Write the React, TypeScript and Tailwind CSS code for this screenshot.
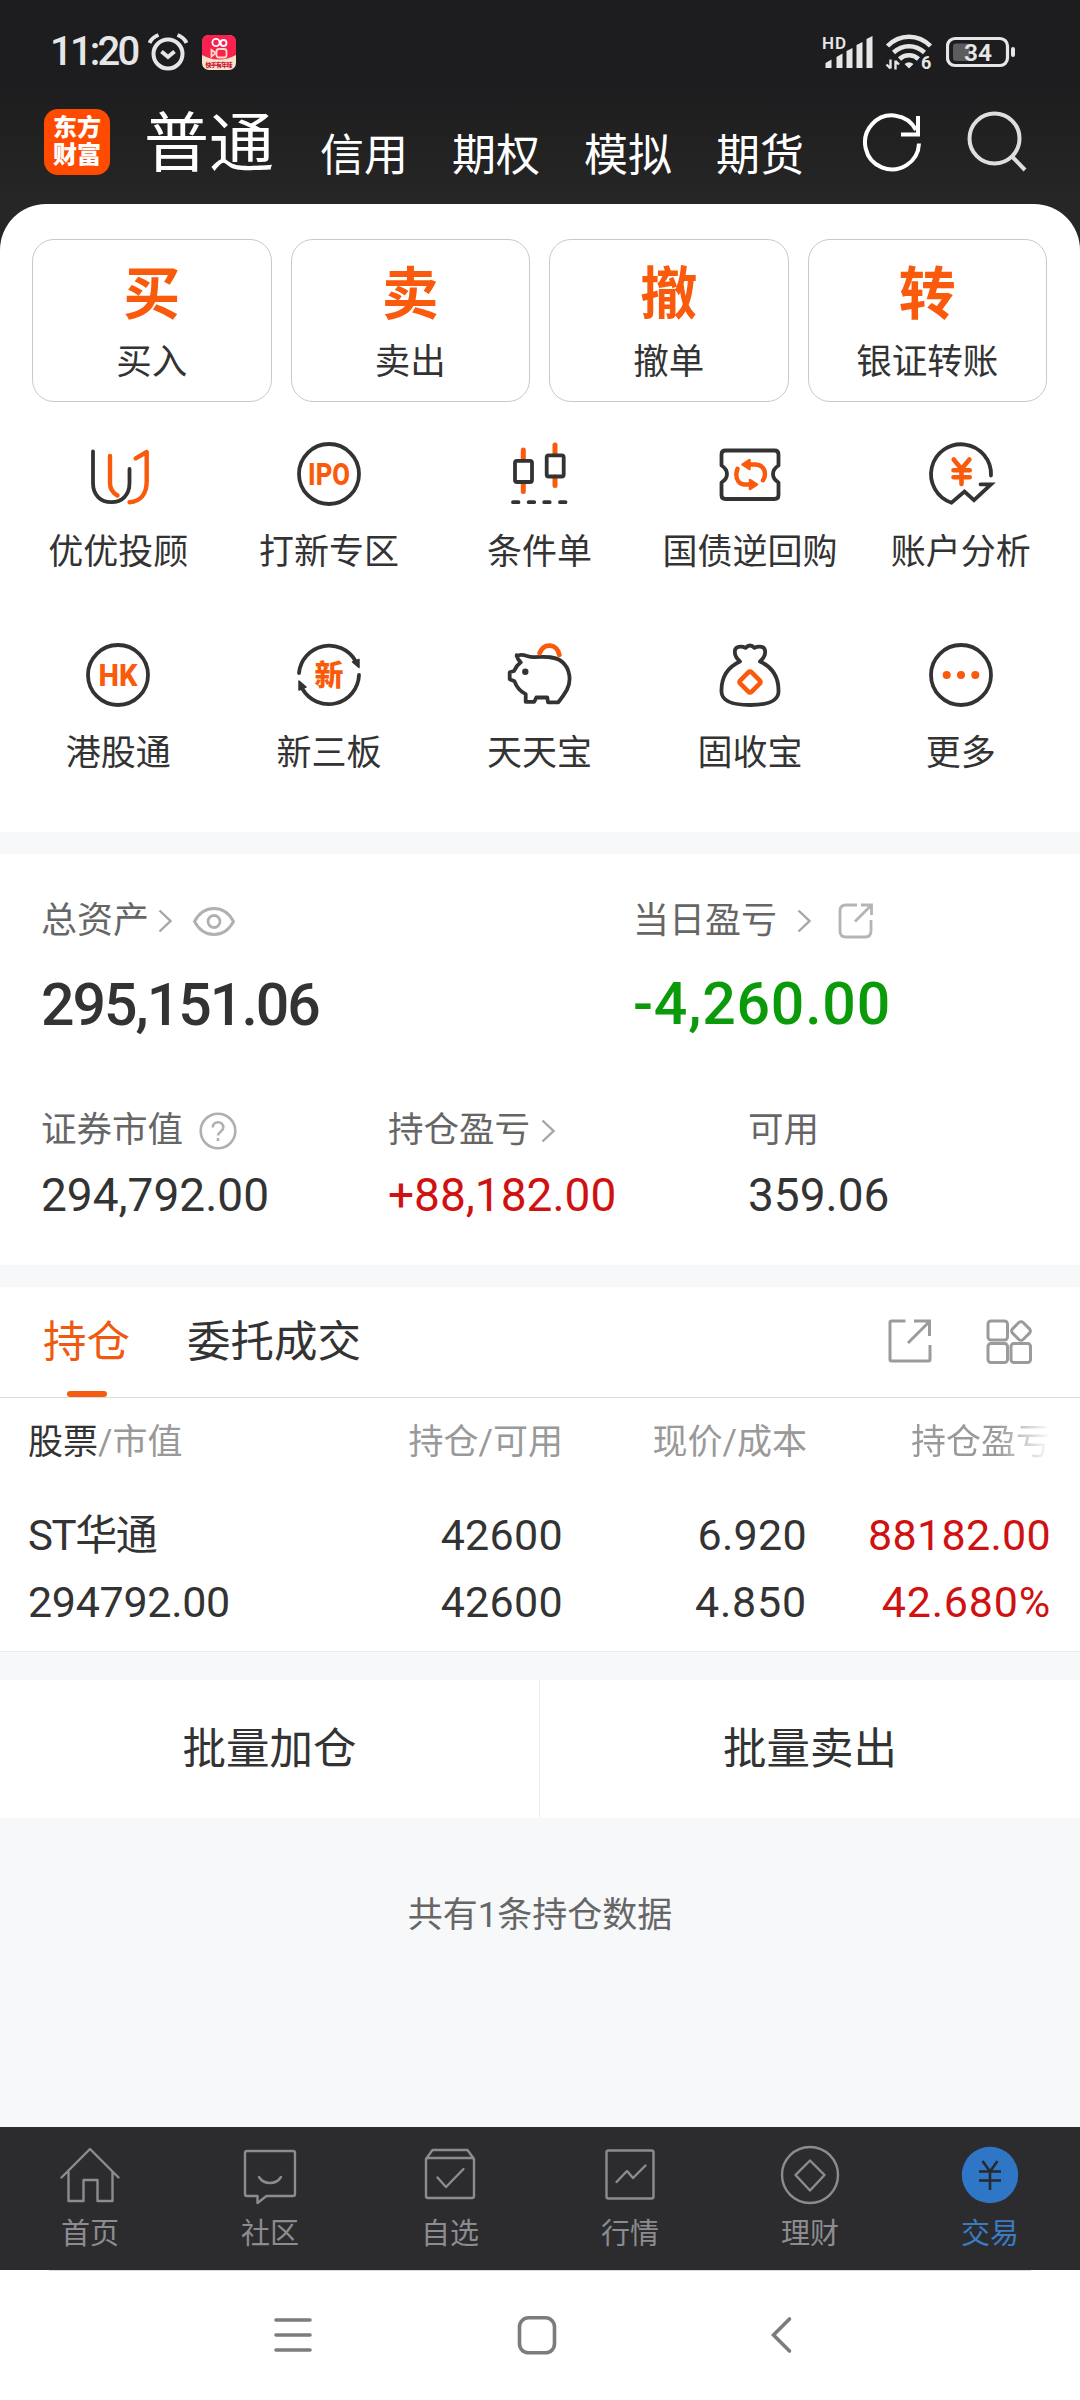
import { useState, type ReactNode } from "react";

const INK = "#333333";
const ORANGE = "#fa5a0c";

const accountTabs = ["信用", "期权", "模拟", "期货"];

const quickActions = [
  { mark: "买", label: "买入" },
  { mark: "卖", label: "卖出" },
  { mark: "撤", label: "撤单" },
  { mark: "转", label: "银证转账" },
];

const features: { label: string; icon: ReactNode }[] = [
  {
    label: "优优投顾",
    icon: (
      <>
        <path d="M11 13.5V45C11 57 18.5 64.2 29.3 64.2S47.5 57 47.5 45V31" />
        <path d="M28 18v27c0 6 3 10 7.5 12.5M53.7 20.3l11-6.3V43c0 13-6 20.5-17.2 21.2" stroke={ORANGE} strokeWidth="4.4" />
      </>
    ),
  },
  {
    label: "打新专区",
    icon: (
      <>
        <circle cx="36" cy="36" r="30" />
        <IconText size={30.5} width={42}>IPO</IconText>
      </>
    ),
  },
  {
    label: "条件单",
    icon: (
      <>
        <path d="M20.3 12v9M20.3 45v8.5M52 7v9M52 39v8.5" stroke={ORANGE} strokeWidth="5" />
        <rect x="12" y="22.8" width="17" height="21.2" rx="2" />
        <rect x="43.7" y="17.3" width="17" height="21.2" rx="2" />
        <path d="M10 64.2h5.5M25.7 64.2h5.5M41.2 64.2h5.5M57 64.2h5.5" />
      </>
    ),
  },
  {
    label: "国债逆回购",
    icon: (
      <>
        <path d="M11.5 12.5h49q4 0 4 4v11q-5.5 3.5-5.5 8.5t5.5 8.5v12.500q0 4-4 4h-49q-4 0-4-4v-12.500q5.5-3.5 5.5-8.5t-5.5-8.5v-11q0-4 4-4z" />
        <g stroke={ORANGE} strokeWidth="4.4">
          <path d="M35 26.5h6c6 0 10 4 10 9.500 0 2.500-.8 4.500-2 6.300M37 46.5h-6c-6 0-8.700-5-8.700-10 0-2.200.5-4 1.200-5.700" />
          <path d="M28.5 26.500l7-4.500v9zM43 46.500l-7-4.500v9z" fill={ORANGE} strokeWidth="2.5" />
        </g>
      </>
    ),
  },
  {
    label: "账户分析",
    icon: (
      <>
        <path d="M66 37.5A30 30 0 1 0 26.500 64.700L39.500 53.500l9.500 8.700L66 46.300H55.500" strokeLinejoin="miter" />
        <path d="M28.700 21.500l7.800 9.500 7.900-9.500M36.500 31v15M28.500 32.300h16.200M28.500 39.300h16.200" stroke={ORANGE} strokeWidth="4.6" />
      </>
    ),
  },
  {
    label: "港股通",
    icon: (
      <>
        <circle cx="36" cy="36" r="30" />
        <IconText size={30.5} width={39}>HK</IconText>
      </>
    ),
  },
  {
    label: "新三板",
    icon: (
      <>
        <path d="M6 34A30.300 30.300 0 0 1 62.500 22M66 36A30.300 30.300 0 0 1 9.500 50" />
        <path d="M66 20.500v8l-6.500-5.500zM6 51v-9l7 6z" fill={INK} strokeWidth="1.5" />
        <IconText size={29} width={29}>新</IconText>
      </>
    ),
  },
  {
    label: "天天宝",
    icon: (
      <>
        <path d="M13.700 17.200C17 15 21 16 24 17q4 1.300 7 1.200C43 17.300 53 17.500 59.300 23c7.500 6.500 9.500 18.500 4.500 28-2.500 4.500-5.500 8.500-8.500 12.300H45l-.7-4.800h-11l-2 4.300h-8.600v-7.700q-8-4-11.200-12.800l-4.800-2v-7l4.300-1.300q2-5 6.700-8.700-3.500-3.500-4-7.100z" />
        <circle cx="22.3" cy="32.7" r="3.2" fill={INK} stroke="none" />
        <path d="M36.700 14C41 3.500 54 4.500 56.300 15.700" stroke={ORANGE} strokeWidth="4.8" />
      </>
    ),
  },
  {
    label: "固收宝",
    icon: (
      <>
        <path d="M26 22.500c-7-6-7-14.800.5-14.800q3 0 5 1.200 4.500-4.800 9 0 2-1.200 5-1.200c7.500 0 7.500 8.800.5 14.800C58 28 65 38 64.500 53 64 62 55 66 36 66S8 62 7.500 53C7 38 14 28 26 22.500z" />
        <rect x="28" y="35" width="16" height="16" rx="2" transform="rotate(45 36 43)" stroke={ORANGE} strokeWidth="4.6" />
      </>
    ),
  },
  {
    label: "更多",
    icon: (
      <>
        <circle cx="36" cy="36" r="30" />
        <g fill={ORANGE} stroke="none">
          <circle cx="21.7" cy="36" r="4" />
          <circle cx="36" cy="36" r="4" />
          <circle cx="50.3" cy="36" r="4" />
        </g>
      </>
    ),
  },
];

const navItems: { label: string; icon: ReactNode }[] = [
  {
    label: "首页",
    icon: <path d="M2 32.500L30.500 4 59 32.500M9 27v29h15V35h14v21h15V27" />,
  },
  {
    label: "社区",
    icon: (
      <>
        <path d="M7.500 6h46q2 0 2 2v41q0 2-2 2H27l-9 7v-7H7.500q-2 0-2-2V8q0-2 2-2z" />
        <path d="M19.500 32c5 8 17 8 22 0" />
      </>
    ),
  },
  {
    label: "自选",
    icon: (
      <>
        <rect x="6.5" y="13" width="48" height="40" rx="2" />
        <path d="M6.500 14L13 5h35l6.500 9M18 32.500l8.500 9.500 17.500-18" />
      </>
    ),
  },
  {
    label: "行情",
    icon: (
      <>
        <rect x="7" y="5.5" width="47" height="48" rx="2" />
        <path d="M17 37l10.500-11 6 7L46 20.500" />
      </>
    ),
  },
  {
    label: "理财",
    icon: (
      <>
        <circle cx="30.5" cy="30" r="28" />
        <path d="M30.500 15.500L45 30 30.500 45.500 16 30z" />
      </>
    ),
  },
  {
    label: "交易",
    icon: (
      <>
        <circle cx="30.5" cy="30" r="28.2" fill="#3076c6" stroke="none" />
        <path d="M23 16l7.500 10.500L38 16M30.500 26v19M19.500 26.500h22M19.500 35.500h22" stroke="#26292e" strokeWidth="2.6" strokeLinecap="butt" />
      </>
    ),
  },
];

function IconText({ size, width, children }: { size: number; width: number; children: string }) {
  return (
    <text
      x={36}
      y={46.8}
      fontSize={size}
      fontWeight={800}
      textAnchor="middle"
      textLength={width}
      lengthAdjust="spacingAndGlyphs"
      fill={ORANGE}
      stroke="none"
    >
      {children}
    </text>
  );
}

function Chevron({ className = "" }: { className?: string }) {
  return (
    <svg width="14" height="24" viewBox="0 0 14 24" fill="none" stroke="#a6a6a6" strokeWidth="2.4" className={className}>
      <path d="M1.500 1.500L12.500 12 1.500 22.500" />
    </svg>
  );
}

function StatusBar() {
  return (
    <div className="flex h-[104px] items-center pl-[50px] pr-[64px] text-[#e6e6e6]">
      <span className="text-[40px] font-medium leading-none tracking-[-2.8px]">11:20</span>
      <svg width="40" height="38" viewBox="0 0 40 38" fill="none" stroke="#e6e6e6" strokeWidth="4" className="ml-[10px]">
        <circle cx="20" cy="21" r="14.5" />
        <path d="M13.500 18.500l6.500 5.500 6.500-5.500" />
        <path d="M1.500 10C3 6.500 6.500 3.500 10.500 2M38.500 10C37 6.500 33.500 3.500 29.500 2" />
      </svg>
      <svg width="34" height="35" viewBox="0 0 34 35" fill="none" className="ml-[14px]">
        <rect width="34" height="35" rx="7" fill="#f7e3c8" />
        <path d="M0 20V7q0-7 7-7h20q7 0 7 7v13q-17 9-34 0z" fill="#f8214f" />
        <g stroke="#fff" strokeWidth="1.8">
          <circle cx="14" cy="7.5" r="3.6" />
          <circle cx="21.5" cy="8" r="3" />
          <rect x="14.5" y="14" width="10" height="8.5" rx="2.5" stroke="#fbdcc0" />
          <path d="M14 18l-4.500-3v6.500z" stroke="#fbdcc0" />
        </g>
        <text x="17" y="32" fontSize="6" fontWeight="900" textAnchor="middle" textLength="27" fill="#c4143a">
          快手有年味
        </text>
      </svg>

      <svg width="52" height="36" viewBox="0 0 52 36" fill="#e6e6e6" className="ml-auto">
        <text x="0" y="14.5" fontSize="17" fontWeight="600" textLength="24">
          HD
        </text>
        <path d="M3.500 34v-5l6-3.500v8.500zM14.500 34V23l6-3.500V34zM24.500 34V17l6-3v20zM34.500 34V11l6-3v26zM44.500 34V5l6-3v32z" strokeLinejoin="round" />
      </svg>
      <svg width="48" height="40" viewBox="0 0 48 40" fill="none" stroke="#e6e6e6" strokeWidth="4.5" className="ml-[11px]">
        <path d="M2.500 14C14.500 1.500 33.500 1.500 45.500 14M8.500 20.500C17.500 12 30.500 12 39.500 20.500M14.500 27c5.500-5 13.500-5 19 0" />
        <path d="M24 36.500l-4.500-4.500q4.500-3.500 9 0z" fill="#e6e6e6" stroke="none" />
        <path d="M5.500 27.500v9M1.500 32.500l4 4M10.500 37.500v-9M10.500 29l3.500 3.500" strokeWidth="2.4" />
        <text x="36" y="37" fontSize="18" fontWeight="700" fill="#e6e6e6" stroke="none">
          6
        </text>
      </svg>
      <svg width="70" height="32" viewBox="0 0 70 32" fill="none" className="ml-[13px]">
        <rect x="1.5" y="2.5" width="60" height="27" rx="7.5" stroke="#e6e6e6" strokeWidth="3.2" />
        <rect x="7" y="7.5" width="17" height="17.5" rx="3" fill="#5c5c5e" />
        <rect x="65" y="11" width="4" height="10" rx="2" fill="#e6e6e6" />
        <text x="32" y="25" fontSize="24.5" fontWeight="600" textAnchor="middle" fill="#e6e6e6">
          34
        </text>
      </svg>
    </div>
  );
}

function AccountBar() {
  return (
    <div className="flex h-[100px] text-white">
      <div className="ml-[44px] mt-[5px] flex size-[66px] flex-col items-center justify-center rounded-[14px] bg-[#ff4b00] text-[24px] font-black leading-[27.5px]">
        <span>东方</span>
        <span>财富</span>
      </div>
      <div className="ml-[34px] flex items-start whitespace-nowrap">
        <span className="mt-[3px] text-[65px] leading-[75px]">普通</span>
        <div className="ml-[46px] mt-[26px] flex gap-[44px] text-[44px] leading-[52px]">
          {accountTabs.map((t) => (
            <span key={t}>{t}</span>
          ))}
        </div>
      </div>
      <svg width="60" height="62" viewBox="0 0 60 62" fill="none" stroke="#fff" strokeWidth="4" className="ml-[58px] mt-[8px]">
        <path d="M57 31.500A27 27 0 1 1 54 18M56 4v18.500H39" />
      </svg>
      <svg width="60" height="62" viewBox="0 0 60 62" fill="none" stroke="#dedede" strokeWidth="4" className="ml-[45px] mt-[6px]">
        <circle cx="27.5" cy="28.5" r="25" />
        <path d="M45 46.500L58 60" />
      </svg>
    </div>
  );
}

function QuickActions() {
  return (
    <div className="grid h-[163px] grid-cols-4 gap-[19px] pl-[32px] pr-[33px]">
      {quickActions.map((a) => (
        <button
          key={a.label}
          type="button"
          className="flex flex-col items-center rounded-[22px] border border-[#c9c9cb] pt-[26px] leading-none"
        >
          <span className="text-[57px] font-bold leading-[58px] text-[#fa5a0c]">{a.mark}</span>
          <span className="mt-[18px] text-[35.5px] leading-[40px] text-[#333]">{a.label}</span>
        </button>
      ))}
    </div>
  );
}

function FeatureGrid() {
  return (
    <div className="grid grid-cols-5 pl-[13px] pr-[14px] pt-[36px]">
      {features.map((f) => (
        <div key={f.label} className="flex h-[201px] flex-col items-center">
          <svg width="72" height="72" viewBox="0 0 72 72" fill="none" stroke={INK} strokeWidth="3.8" strokeLinecap="round" strokeLinejoin="round">
            {f.icon}
          </svg>
          <span className="mt-[23px] text-[35px] leading-[40px] text-[#333]">{f.label}</span>
        </div>
      ))}
    </div>
  );
}

function Summary() {
  const [hidden, setHidden] = useState(false);
  const show = (v: string) => (hidden ? "****" : v);

  return (
    <section className="h-[411px] bg-white pl-[41px] pt-[47px] text-[#666]">
      <div className="flex">
        <div className="w-[592px]">
          <div className="flex h-[40px] items-center text-[36px] leading-none">
            总资产
            <Chevron className="ml-[9px]" />
            <button type="button" onClick={() => setHidden((v) => !v)} className="ml-[21px]">
              <svg width="42" height="29" viewBox="0 0 42 29" fill="none" stroke="#b0b0b0" strokeWidth="2.8">
                <path d="M1.500 14.500C6 6 13 1.500 21 1.500S36 6 40.500 14.500C36 23 29 27.500 21 27.500S6 23 1.500 14.500z" />
                <circle cx="21" cy="14.5" r="6" />
              </svg>
            </button>
          </div>
          <div className="mt-[29px] text-[59px] font-medium leading-[70px] tracking-[-2px] text-[#333]">
            {show("295,151.06")}
          </div>
        </div>
        <div>
          <div className="flex h-[40px] items-center text-[36px] leading-none">
            当日盈亏
            <Chevron className="ml-[20px]" />
            <svg width="36" height="36" viewBox="0 0 36 36" fill="none" stroke="#b5b5b5" strokeWidth="2.8" className="ml-[27px]">
              <path d="M19 2H8Q2 2 2 8v20q0 6 6 6h19q6 0 6-6V17M23 2h10.500v10M33.500 2L17 18.500" />
            </svg>
          </div>
          <div className="mt-[28px] text-[59px] font-medium leading-[70px] tracking-[0.8px] text-[#0a9a0a]">
            {show("-4,260.00")}
          </div>
        </div>
      </div>

      <div className="mt-[71px] flex">
        <div className="w-[347px]">
          <div className="flex h-[40px] items-center text-[35.5px] leading-none">
            证券市值
            <svg width="38" height="38" viewBox="0 0 38 38" fill="none" stroke="#b0b0b0" strokeWidth="2.6" className="ml-[16px]">
              <circle cx="19" cy="19" r="17.3" />
              <path d="M13.800 15.500c0-7 10.500-7 10.500 0 0 4-5.300 4.300-5.300 8M19 26v3" />
            </svg>
          </div>
          <div className="mt-[18px] text-[46px] leading-[52px] text-[#333]">{show("294,792.00")}</div>
        </div>
        <div className="w-[360px]">
          <div className="flex h-[40px] items-center text-[35.5px] leading-none">
            持仓盈亏
            <Chevron className="ml-[11px]" />
          </div>
          <div className="mt-[18px] text-[46px] leading-[52px] text-[#cf1111]">{show("+88,182.00")}</div>
        </div>
        <div>
          <div className="flex h-[40px] items-center text-[35.5px] leading-none">可用</div>
          <div className="mt-[18px] text-[46px] leading-[52px] text-[#333]">{show("359.06")}</div>
        </div>
      </div>
    </section>
  );
}

function Holdings() {
  return (
    <section className="bg-white">
      <div className="flex h-[111px] border-b border-[#dcdcde] pl-[43px] pr-[48px] text-[43.5px] leading-[111px]">
        <div className="flex flex-col items-center text-[#ee5a10]">
          <span className="h-[104px]">持仓</span>
          <span className="h-[6px] w-[40px] rounded-full bg-[#f65c10]" />
        </div>
        <span className="ml-[57px] text-[#333]">委托成交</span>
        <svg width="44" height="44" viewBox="0 0 44 44" fill="none" stroke="#9b9b9b" strokeWidth="3" className="ml-auto mt-[32px]">
          <path d="M17.500 2H3.500Q2 2 2 3.500v37Q2 42 3.500 42h37q1.500 0 1.500-1.500V26M26 2h15.500v15M41 3L20 24" />
        </svg>
        <svg width="46" height="46" viewBox="0 0 46 46" fill="none" stroke="#9b9b9b" strokeWidth="3" className="ml-[54px] mt-[32px]">
          <rect x="2" y="2" width="19.5" height="19" rx="3" />
          <rect x="2" y="24.5" width="19.5" height="19" rx="3" />
          <rect x="25" y="24.5" width="19.5" height="19" rx="3" />
          <rect x="27.5" y="4.5" width="15" height="15" rx="3" transform="rotate(45 35 12)" />
        </svg>
      </div>

      <div className="grid h-[253px] grid-cols-[291px_244px_244px_244px] grid-rows-[88px_67px_66px] pl-[28px] text-right text-[43px] tracking-[0.3px] text-[#333]">
        <span className="text-left text-[35px] leading-[89px] tracking-normal text-[#999]">
          <span className="text-[#333]">股票</span>/市值
        </span>
        <span className="text-[35px] leading-[89px] tracking-normal text-[#999]">持仓/可用</span>
        <span className="text-[35px] leading-[89px] tracking-normal text-[#999]">现价/成本</span>
        <span className="bg-linear-to-r from-[#999] from-[190px] to-white to-[244px] bg-clip-text text-[35px] leading-[89px] tracking-normal text-transparent">
          持仓盈亏
        </span>

        <span className="text-left text-[42px] leading-[99px] tracking-[-1.4px]">ST华通</span>
        <span className="leading-[99px]">42600</span>
        <span className="leading-[99px]">6.920</span>
        <span className="leading-[99px] text-[#cf1111]">88182.00</span>

        <span className="text-left leading-[98px] tracking-[-0.3px]">294792.00</span>
        <span className="leading-[98px]">42600</span>
        <span className="leading-[98px] tracking-[0.8px]">4.850</span>
        <span className="leading-[98px] tracking-[0.8px] text-[#cf1111]">42.680%</span>
      </div>
    </section>
  );
}

function BottomNav() {
  return (
    <nav className="grid h-[143px] grid-cols-6 bg-[#2c2c2e] pt-[18px]">
      {navItems.map((n) => {
        const active = n.label === "交易";
        return (
          <div key={n.label} className="flex flex-col items-center">
            <svg width="61" height="61" viewBox="0.5 0 61 61" fill="none" stroke="#8c8c90" strokeWidth="2.4" strokeLinecap="round" strokeLinejoin="round">
              {n.icon}
            </svg>
            <span className={`mt-[11px] text-[29px] leading-[34px] ${active ? "text-[#3a7bc4]" : "text-[#8c8c90]"}`}>
              {n.label}
            </span>
          </div>
        );
      })}
    </nav>
  );
}

function SystemBar() {
  return (
    <div className="mx-[49px] flex h-[130px] justify-center border-t border-[#dadada] bg-white pr-[7px] pt-[45px]">
      <svg width="40" height="40" viewBox="0 0 40 40" stroke="#7c7c7c" strokeWidth="3.6" strokeLinecap="round">
        <path d="M3 4h34M3 19h34M3 34h34" />
      </svg>
      <svg width="40" height="40" viewBox="0 0 40 40" fill="none" stroke="#7c7c7c" strokeWidth="3.6" className="mx-[204px]">
        <rect x="2.5" y="1.8" width="35" height="35" rx="9" />
      </svg>
      <svg width="40" height="40" viewBox="0 0 40 40" fill="none" stroke="#7c7c7c" strokeWidth="3.6" strokeLinecap="round">
        <path d="M28.500 3L12.500 19l16 16" />
      </svg>
    </div>
  );
}

export default function App() {
  return (
    <div className="flex h-[2400px] w-[1080px] flex-col overflow-hidden bg-white font-['Roboto','Noto_Sans_CJK_SC',sans-serif]">
      <div className="bg-linear-to-b from-[#1d1d1f] from-[80px] to-[#262626] to-[204px]">
        <StatusBar />
        <AccountBar />
        <div className="h-[628px] rounded-t-[46px] bg-white pt-[35px]">
          <QuickActions />
          <FeatureGrid />
        </div>
      </div>
      <div className="h-[22px] bg-[#f7f8fa]" />
      <Summary />
      <div className="h-[22px] bg-[#f7f8fa]" />
      <Holdings />
      <div className="h-[29px] border-t border-[#ececee] bg-[#f7f8fa]" />
      <div className="flex h-[138px] text-[43.5px] leading-[140px] text-[#333]">
        <span className="w-[540px] border-r border-[#ebebed] text-center">批量加仓</span>
        <span className="flex-1 text-center">批量卖出</span>
      </div>
      <div className="flex-1 bg-[#f6f8fa] pt-[77px] text-center text-[35px] leading-[42px] text-[#666]">
        共有1条持仓数据
      </div>
      <BottomNav />
      <SystemBar />
    </div>
  );
}
